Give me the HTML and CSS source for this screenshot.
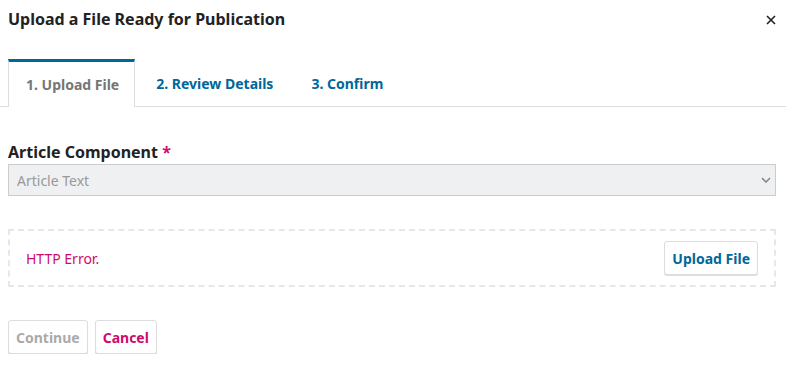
FILE: index.html
```html
<!DOCTYPE html>
<html lang="en">
<head>
    <meta charset="UTF-8">
    <title>Upload a File Ready for Publication</title>
    <link rel="stylesheet" href="styles.css">
</head>
<body>
    <div class="modal">
        <div class="modal-header">
            <h1>Upload a File Ready for Publication</h1>
            <button class="close" type="button" aria-label="Close">
                <svg width="10" height="10" viewBox="0 0 10 10">
                    <path d="M1 1L9 9M9 1L1 9" stroke="#222" stroke-width="1.6"/>
                </svg>
            </button>
        </div>

        <div class="tabs">
            <a class="tab active">1. Upload File</a>
            <a class="tab">2. Review Details</a>
            <a class="tab">3. Confirm</a>
        </div>

        <form class="upload-form">
            <label class="field-label" for="component">Article Component <span class="req">*</span></label>
            <div class="select-wrap">
                <select id="component" disabled>
                    <option>Article Text</option>
                </select>
                <svg class="chevron" width="10" height="6" viewBox="0 0 10 6">
                    <path d="M1 1L5 5L9 1" fill="none" stroke="#888" stroke-width="1.6"/>
                </svg>
            </div>

            <div class="dropzone">
                <span class="error">HTTP Error.</span>
                <button class="btn btn-primary" type="button">Upload File</button>
            </div>

            <div class="actions">
                <button class="btn btn-disabled" type="button">Continue</button>
                <button class="btn btn-cancel" type="button">Cancel</button>
            </div>
        </form>
    </div>
</body>
</html>
```

FILE: styles.css
```css
body {
    margin: 0;
    font-family: "Noto Sans", sans-serif;
    color: #222222;
    background: #ffffff;
}
.modal {
    width: 786px;
}
.modal-header {
    display: flex;
    justify-content: space-between;
    align-items: center;
    padding: 5px 10px 0 8px;
    height: 27px;
}
h1 {
    margin: 0;
    font-size: 16px;
    font-weight: 700;
}
.close {
    background: none;
    border: none;
    padding: 0;
    margin-top: 2px;
    display: flex;
}

.tabs {
    display: flex;
    margin-top: 27px;
    padding-left: 8px;
    border-bottom: 1px solid #dddddd;
    height: 47px;
}
.tab {
    display: flex;
    align-items: center;
    padding: 0 17px 0 21px;
    font-size: 14px;
    font-weight: 700;
    color: #006798;
    margin-bottom: -1px;
}
.tab.active {
    color: #767676;
    border-top: 3px solid #006798;
    border-left: 1px solid #dddddd;
    border-right: 1px solid #dddddd;
    background: #ffffff;
    padding: 0 15px 1px 17px;
}

.upload-form {
    padding: 35px 10px 0 8px;
}
.field-label {
    display: block;
    font-size: 16px;
    font-weight: 700;
    line-height: 20px;
}
.req {
    color: #d00a6c;
}
.select-wrap {
    position: relative;
    margin-top: 2px;
}
select {
    width: 100%;
    height: 32px;
    -webkit-appearance: none;
    appearance: none;
    background: #eff0f2;
    border: 1px solid #cccccc;
    border-radius: 0;
    font-family: inherit;
    font-size: 14px;
    color: #999999;
    padding: 0 8px;
    opacity: 1;
}
.chevron {
    position: absolute;
    right: 5px;
    top: 13px;
}

.dropzone {
    display: flex;
    justify-content: space-between;
    align-items: center;
    margin-top: 33px;
    height: 54px;
    padding: 0 16px 0 16px;
    border: 2px dashed #e5e8ea;
}
.error {
    color: #d00a6c;
    font-size: 14px;
}
.btn {
    font-family: inherit;
    font-size: 14px;
    font-weight: 700;
    height: 34px;
    padding: 0 7px;
    background: #ffffff;
    border: 1px solid #dddddd;
    border-radius: 3px;
    box-shadow: 0 1px 0 #dddddd;
}
.btn-primary {
    color: #006798;
}
.actions {
    display: flex;
    gap: 7px;
    margin-top: 33px;
}
.btn-disabled {
    color: #aaaaaa;
}
.btn-cancel {
    color: #d00a6c;
}
```
